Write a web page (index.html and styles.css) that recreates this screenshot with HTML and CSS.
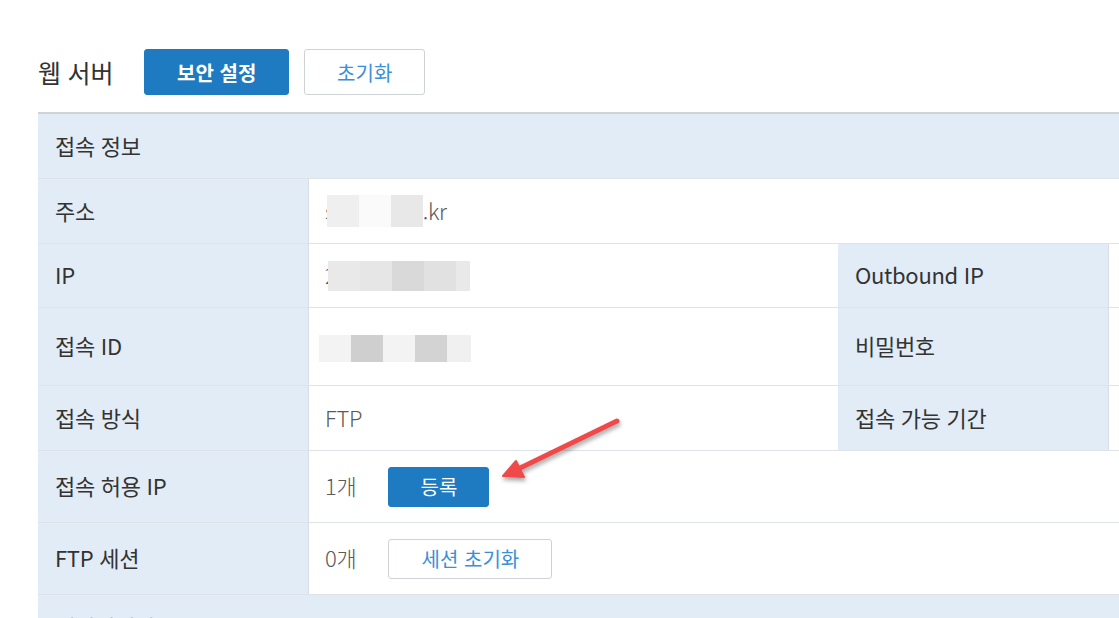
FILE: index.html
```html
<!DOCTYPE html>
<html lang="ko">
<head>
<meta charset="utf-8">
<title>웹 서버</title>
<link rel="stylesheet" href="styles.css">
</head>
<body>
<div class="page">
  <div class="head">
    <h2 class="title">웹 서버</h2>
    <button class="btn btn-primary btn-lg">보안 설정</button>
    <button class="btn btn-outline btn-lg btn-reset">초기화</button>
  </div>

  <div class="info">
    <div class="row row-section"><div class="cell section">접속 정보</div></div>

    <div class="row row-addr">
      <div class="cell label">주소</div>
      <div class="cell value span3"><span>s</span><span class="blur b-addr"><i class="px p1"></i><i class="px p2"></i><i class="px p3"></i></span>.kr</div>
    </div>

    <div class="row row-ip">
      <div class="cell label">IP</div>
      <div class="cell value"><span>2</span><span class="blur b-ip"><i class="px q1"></i><i class="px q2"></i><i class="px q3"></i><i class="px q4"></i><i class="px q5"></i></span></div>
      <div class="cell label">Outbound IP</div>
      <div class="cell value"></div>
    </div>

    <div class="row row-id">
      <div class="cell label">접속 ID</div>
      <div class="cell value"><span class="blur b-id"><i class="px r1"></i><i class="px r2"></i><i class="px r3"></i><i class="px r4"></i><i class="px r5"></i></span></div>
      <div class="cell label">비밀번호</div>
      <div class="cell value"></div>
    </div>

    <div class="row row-method">
      <div class="cell label">접속 방식</div>
      <div class="cell value">FTP</div>
      <div class="cell label">접속 가능 기간</div>
      <div class="cell value"></div>
    </div>

    <div class="row row-allow">
      <div class="cell label">접속 허용 IP</div>
      <div class="cell value span3"><span class="count">1개</span><button class="btn btn-primary btn-sm btn-reg">등록</button></div>
    </div>

    <div class="row row-session">
      <div class="cell label">FTP 세션</div>
      <div class="cell value span3"><span class="count">0개</span><button class="btn btn-outline btn-sm btn-sess">세션 초기화</button></div>
    </div>

    <div class="row row-section"><div class="cell section section-next">데이터베이스</div></div>
  </div>

  <svg class="arrow" width="150" height="90" viewBox="490 400 150 90" aria-hidden="true">
    <defs>
      <filter id="sh" x="-20%" y="-20%" width="140%" height="160%">
        <feDropShadow dx="1" dy="3" stdDeviation="2" flood-color="#000" flood-opacity="0.35"/>
      </filter>
    </defs>
    <g filter="url(#sh)" fill="#f04a4a" stroke="#f04a4a" stroke-linecap="round" stroke-linejoin="round">
      <line x1="617" y1="421" x2="514" y2="471" stroke-width="5"/>
      <polygon points="503,476 516,461 524,477" stroke-width="2"/>
    </g>
  </svg>
</div>
</body>
</html>
```

FILE: styles.css
```css
html, body {
  margin: 0;
  padding: 0;
  background: #fff;
  overflow: hidden;
}

body {
  font-family: "Noto Sans CJK KR", "Noto Sans", sans-serif;
  color: #333;
}

.page {
  position: relative;
  width: 1119px;
  height: 618px;
  overflow: hidden;
  padding-left: 38px;
  box-sizing: border-box;
}

.head {
  display: flex;
  align-items: center;
  padding-top: 49px;
  height: 46px;
}

.title {
  margin: 0 31px 0 0;
  font-size: 25px;
  font-weight: 400;
  color: #333;
  letter-spacing: -0.2px;
}

.btn {
  font-family: inherit;
  box-sizing: border-box;
  border-radius: 3px;
  cursor: pointer;
  display: inline-flex;
  align-items: center;
  justify-content: center;
  padding: 0;
}

.btn-primary {
  background: #1e7bc1;
  border: 1px solid #1e7bc1;
  color: #fff;
}

.btn-outline {
  background: #fff;
  border: 1px solid #cfd3d8;
  color: #3a8fd9;
}

.btn-lg {
  height: 46px;
  font-size: 20px;
}

.btn-primary.btn-lg {
  width: 145px;
  font-weight: 700;
}

.btn-reset {
  width: 121px;
  margin-left: 15px;
}

.btn-sm {
  height: 40px;
  font-size: 20px;
}

.btn-reg {
  width: 101px;
}

.btn-sess {
  width: 164px;
}

.info {
  margin-top: 17px;
  width: 1400px;
  border-top: 2px solid #cfd2d6;
}

.row {
  display: grid;
  grid-template-columns: 271px 529px 271px 329px;
  border-bottom: 1px solid #dfe3e8;
  box-sizing: border-box;
}

.row-section { height: 65px; }
.row-addr { height: 65px; }
.row-ip { height: 64px; }
.row-id { height: 78px; }
.row-method { height: 65px; }
.row-allow { height: 72px; }
.row-session { height: 72px; }

.cell {
  display: flex;
  align-items: center;
  padding: 0 17px 3px;
  font-size: 22px;
  letter-spacing: -0.3px;
  box-sizing: border-box;
}

.section {
  grid-column: 1 / -1;
  background: #e2ecf6;
  color: #333;
}

.section-next {
  padding-bottom: 2px;
}

.label {
  background: #e2ecf6;
  border-right: 1px solid #d8dee6;
  color: #333;
}

.value {
  color: #5a5a5a;
  font-weight: 300;
  padding-left: 16px;
}

.span3 {
  grid-column: span 3;
}

.blur {
  display: inline-flex;
}

.px {
  display: block;
  width: 32px;
}

.b-addr { margin-left: -8px; margin-top: 3px; }
.b-addr .px { height: 32px; }
.p1 { background: #efefef; }
.p2 { background: #fafafa; }
.p3 { background: #e8e8e8; }

.b-ip { margin-left: -8px; margin-top: 3px; }
.b-ip .px { height: 30px; }
.q1 { background: #e9e9e9; }
.q2 { background: #e6e6e6; }
.q3 { background: #d9d9d9; }
.q4 { background: #e1e1e1; }
.q5 { background: #e9e9e9; width: 14px; }

.b-id { margin-left: -6px; margin-top: 7px; }
.b-id .px { height: 27px; }
.r1 { background: #f3f3f3; }
.r2 { background: #cfcfcf; }
.r3 { background: #f3f3f3; }
.r4 { background: #d3d3d3; }
.r5 { background: #f0f0f0; width: 24px; }

.count {
  margin-right: 32px;
}

.value .btn {
  margin-top: 3px;
}

.arrow {
  position: absolute;
  left: 490px;
  top: 400px;
  overflow: visible;
}
```
